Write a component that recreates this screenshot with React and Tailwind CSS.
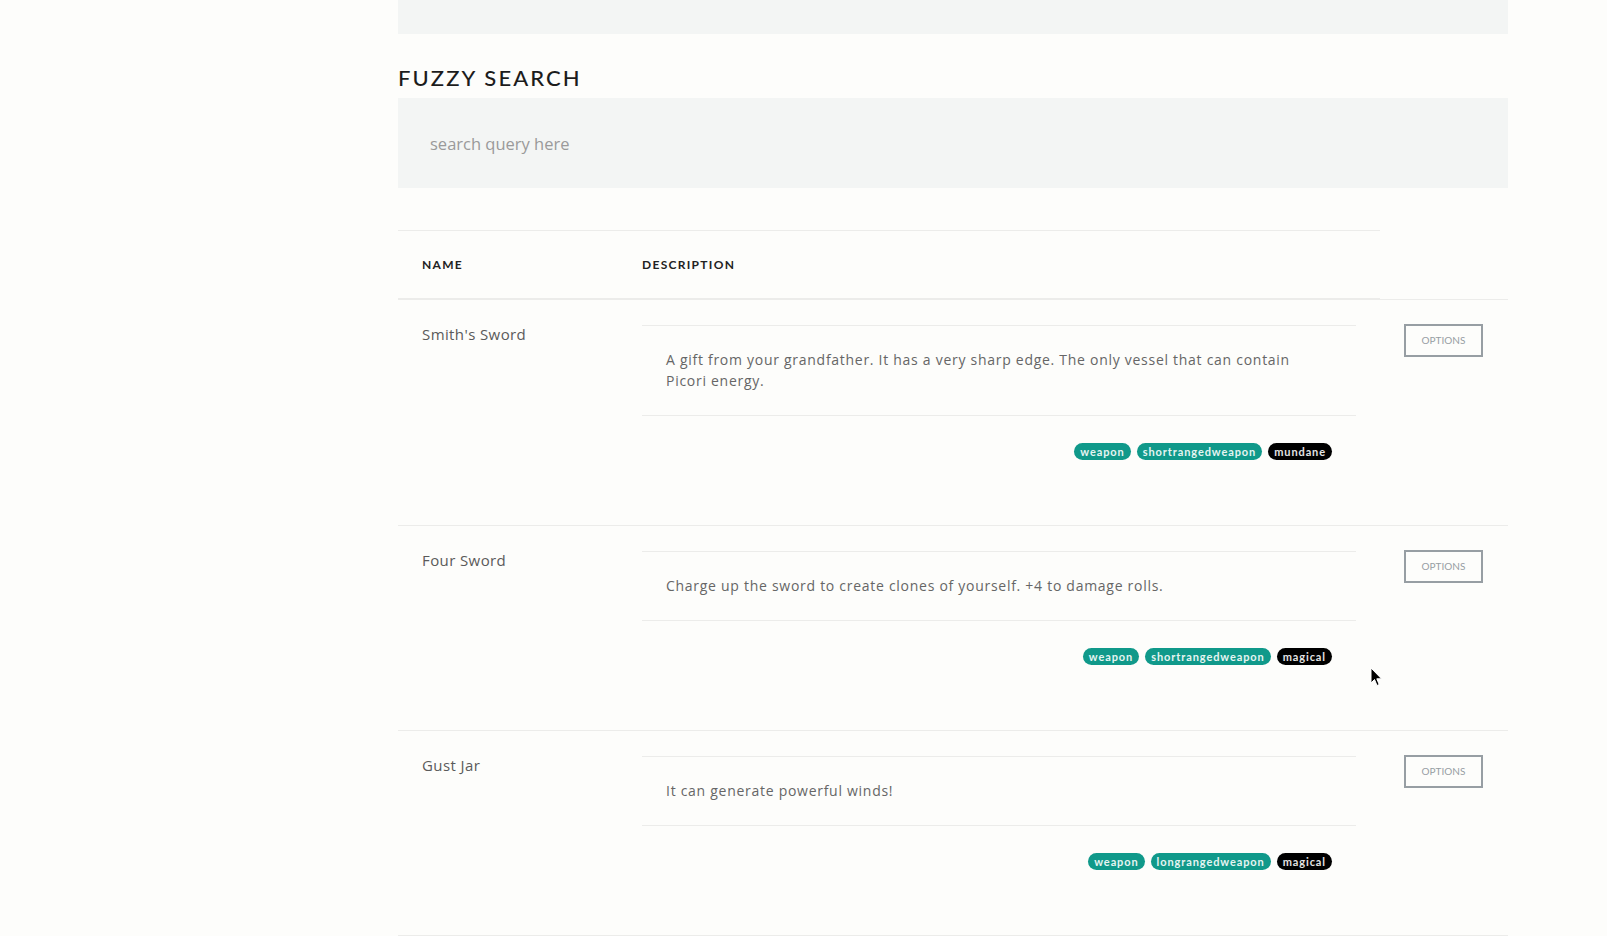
import React from "react";

const items = [
  {
    name: "Smith's Sword",
    desc: "A gift from your grandfather. It has a very sharp edge. The only vessel that can contain Picori energy.",
    tags: [
      ["weapon", "teal"],
      ["shortrangedweapon", "teal"],
      ["mundane", "black"],
    ],
  },
  {
    name: "Four Sword",
    desc: "Charge up the sword to create clones of yourself. +4 to damage rolls.",
    tags: [
      ["weapon", "teal"],
      ["shortrangedweapon", "teal"],
      ["magical", "black"],
    ],
  },
  {
    name: "Gust Jar",
    desc: "It can generate powerful winds!",
    tags: [
      ["weapon", "teal"],
      ["longrangedweapon", "teal"],
      ["magical", "black"],
    ],
  },
];

const bodyFont = { fontFamily: '"Open Sans", "Noto Sans", sans-serif' };
const headFont = { fontFamily: 'Lato, "Noto Sans", sans-serif' };

function Tag({ label, kind }) {
  return (
    <span
      style={headFont}
      className={
        kind === "teal"
          ? "h-[17px] px-[6px] rounded-full text-[11px] leading-[17px] font-bold tracking-[0.9px] bg-[#10998a] text-[#e6f5f2]"
          : "h-[17px] px-[6px] rounded-full text-[11px] leading-[17px] font-bold tracking-[0.9px] bg-black text-[#e4e4e4]"
      }
    >
      {label}
    </span>
  );
}

function Row({ item }) {
  return (
    <div className="flex border-t border-[#ececea] pt-[25px] pb-[37px]">
      <div className="w-[220px] shrink-0 pl-[24px]">
        <div style={bodyFont} className="text-[15px] leading-[18px] tracking-[0.4px] text-[#5a5a5a]">
          {item.name}
        </div>
      </div>
      <div className="w-[762px] shrink-0 px-[24px]">
        <div className="border-t border-b border-[#ececea] pl-[24px] pr-[24px] pt-[23px] pb-[24px]">
          <p style={bodyFont} className="text-[14px] leading-[21px] tracking-[0.72px] text-[#666666]">
            {item.desc}
          </p>
        </div>
        <div className="pt-[23px] pb-[25px] pr-[24px] h-[72px]">
          <div className="h-[24px] flex items-center justify-end gap-[6px]">
            {item.tags.map(([l, k]) => (
              <Tag key={l} label={l} kind={k} />
            ))}
          </div>
        </div>
      </div>
      <div className="w-[128px] shrink-0 pl-[24px]">
        <button
          style={headFont}
          className="-mt-px w-[79px] h-[33px] border-2 border-[#979ea3] text-[10px] text-[#979ea3] uppercase bg-transparent"
        >
          Options
        </button>
      </div>
    </div>
  );
}

export default function App() {
  return (
    <div className="relative w-full h-[936px] overflow-hidden bg-[#fdfdfb]">
      <div className="flex">
        <div className="w-[398px] shrink-0" />
        <div className="w-[1110px] shrink-0">
          <div className="h-[34px] bg-[#f3f5f4]" />
          <h1
            style={headFont}
            className="mt-[31px] mb-[7px] h-[26px] text-[22px] leading-[26px] tracking-[2.1px] font-medium text-[#1c1c1c] uppercase"
          >
            Fuzzy Search
          </h1>
          <input
            style={bodyFont}
            className="block w-full h-[90px] bg-[#f3f5f4] px-[32px] text-[16.5px] text-[#555] placeholder:text-[#9a9a9a] outline-none"
            placeholder="search query here"
          />
          <div className="mt-[42px] w-[982px] h-[69px] border-t border-b border-[#ececea] flex items-center">
            <div
              style={headFont}
              className="w-[220px] pl-[24px] text-[12px] font-bold tracking-[1.3px] text-[#222] uppercase"
            >
              Name
            </div>
            <div
              style={headFont}
              className="pl-[24px] text-[12px] font-bold tracking-[1.3px] text-[#222] uppercase"
            >
              Description
            </div>
          </div>
          {items.map((it) => (
            <Row key={it.name} item={it} />
          ))}
          <div className="border-t border-[#ececea]" />
        </div>
      </div>
      <svg
        className="absolute left-[1370px] top-[667px]"
        width="13"
        height="20"
        viewBox="0 0 13 20"
      >
        <path
          d="M1 1 L1 16 L4.5 12.5 L7 18.5 L9.2 17.5 L6.8 11.8 L11.5 11.8 Z"
          fill="#000"
          stroke="#fff"
          strokeWidth="1"
          strokeLinejoin="round"
        />
      </svg>
    </div>
  );
}
